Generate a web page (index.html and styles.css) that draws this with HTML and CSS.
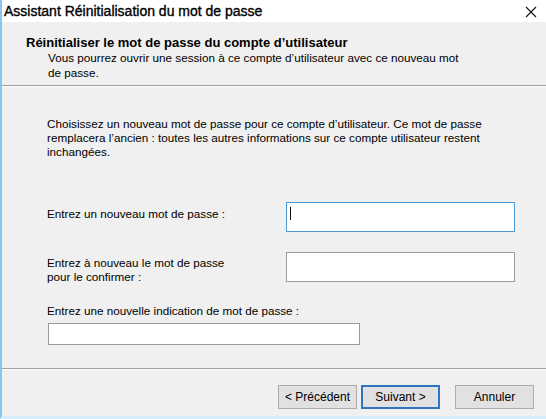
FILE: index.html
```html
<!DOCTYPE html>
<html lang="fr">
<head>
<meta charset="utf-8">
<title>Assistant Réinitialisation du mot de passe</title>
<link rel="stylesheet" href="styles.css">
</head>
<body>
<div class="window">
  <div class="titlebar">
    <span class="title">Assistant Réinitialisation du mot de passe</span>
    <svg class="close" width="12" height="12" viewBox="0 0 12 12"><path d="M1 1 L11 11 M11 1 L1 11" stroke="#111" stroke-width="1.1" fill="none"/></svg>
  </div>
  <div class="header">
    <div class="heading">Réinitialiser le mot de passe du compte d’utilisateur</div>
    <div class="sub">Vous pourrez ouvrir une session à ce compte d’utilisateur avec ce nouveau mot de passe.</div>
  </div>
  <div class="content">
    <p class="intro">Choisissez un nouveau mot de passe pour ce compte d’utilisateur. Ce mot de passe remplacera l’ancien : toutes les autres informations sur ce compte utilisateur restent inchangées.</p>
    <div class="row row1">
      <div class="label l1">Entrez un nouveau mot de passe :</div>
      <div class="field focused"></div>
    </div>
    <div class="row row2">
      <div class="label l2">Entrez à nouveau le mot de passe<br>pour le confirmer :</div>
      <div class="field"></div>
    </div>
    <div class="label l3">Entrez une nouvelle indication de mot de passe :</div>
    <div class="field hint"></div>
  </div>
  <div class="footer">
    <button class="btn">&lt; Précédent</button>
    <button class="btn default">Suivant &gt;</button>
    <button class="btn cancel">Annuler</button>
  </div>
</div>
</body>
</html>
```
FILE: styles.css
```css
html, body {
  margin: 0;
  padding: 0;
  background: #f0f0f0;
}
body {
  font-family: "Liberation Sans", Arial, sans-serif;
  color: #000;
  font-size: 11.7px;
}
.window {
  width: 546px;
  height: 419px;
  box-sizing: border-box;
  border-left: 2px solid #86c8ee;
  border-bottom: 3px solid #d6eefb;
  display: flex;
  flex-direction: column;
  background: #f0f0f0;
}
.titlebar {
  height: 22px;
  flex: none;
  background: #fff;
  display: flex;
  align-items: center;
  justify-content: space-between;
  padding: 0 9px 0 2px;
}
.title {
  font-size: 14px;
  color: #000;
  -webkit-text-stroke: 0.35px #000;
}
.close {
  margin-top: 2px;
}
.header {
  height: 64px;
  flex: none;
  box-sizing: border-box;
  padding: 13px 0 0 24px;
  border-bottom: 1px solid #a0a0a0;
  box-shadow: 0 1px 0 #fff;
}
.heading {
  font-weight: bold;
  font-size: 13px;
  line-height: 15px;
}
.sub {
  padding-left: 22px;
  width: 420px;
  line-height: 15px;
}
.content {
  flex: 1;
  padding: 31px 0 0 45px;
}
.intro {
  margin: 0;
  width: 456px;
  line-height: 14px;
}
.row {
  display: flex;
}
.row1 {
  margin-top: 43px;
}
.row2 {
  margin-top: 20px;
}
.label {
  line-height: 14px;
}
.row .label {
  width: 239px;
  flex: none;
}
.l1 {
  padding-top: 5px;
}
.l2 {
  padding-top: 4px;
}
.l3 {
  margin-top: 20px;
}
.field {
  width: 229px;
  height: 30px;
  box-sizing: border-box;
  background: #fff;
  border: 1px solid #9a9a9a;
  position: relative;
}
.field.focused {
  border-color: #4a9bd8;
}
.field.focused::before {
  content: "";
  position: absolute;
  left: 3px;
  top: 4px;
  width: 1px;
  height: 13px;
  background: #111;
}
.field.hint {
  margin: 5px 0 0 1px;
  width: 312px;
  height: 22px;
}
.footer {
  height: 48px;
  flex: none;
  box-sizing: border-box;
  border-top: 1px solid #a0a0a0;
  box-shadow: inset 0 1px 0 #fff;
  display: flex;
  justify-content: flex-end;
  align-items: flex-start;
  padding: 16px 12px 0 0;
}
.btn {
  font-family: "Liberation Sans", Arial, sans-serif;
  font-size: 12px;
  color: #000;
  width: 79px;
  height: 24px;
  margin: 0;
  padding: 0;
  background: #e1e1e1;
  border: 1px solid #adadad;
}
.btn.default {
  margin-left: 4px;
  border: 2px solid #2e77c0;
}
.btn.cancel {
  margin-left: 15px;
}
```
